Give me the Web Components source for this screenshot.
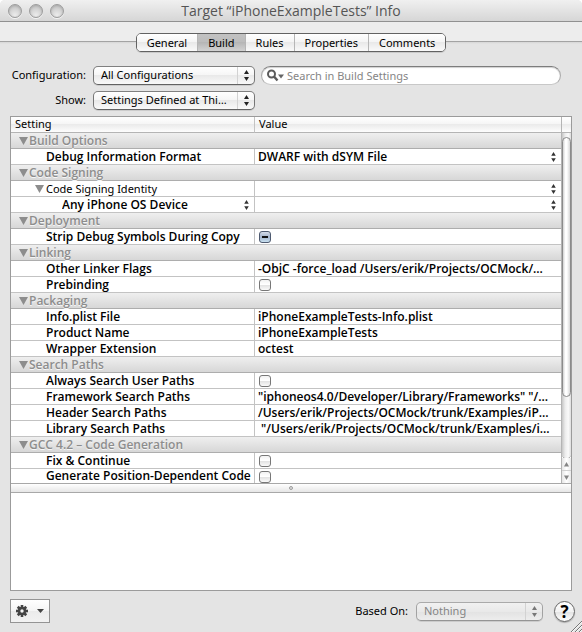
<!DOCTYPE html>
<html lang="en">
<head>
<meta charset="utf-8">
<title>Target “iPhoneExampleTests” Info</title>
<style>
html, body { margin: 0; height: 100%; }
body {
  background: #fff;
  color: #000;
  font: 11px/16px "Noto Sans", "Open Sans", "Liberation Sans", sans-serif;
}
</style>
</head>
<body>
<info-window>
  <title-bar slot="title">Target “iPhoneExampleTests” Info</title-bar>
  <segmented-tabs slot="tabs" items="General,Build,Rules,Properties,Comments" selected="Build"></segmented-tabs>
  <popup-field slot="filters" label="Configuration:" value="All Configurations"></popup-field>
  <search-field slot="filters" placeholder="Search in Build Settings"></search-field>
  <popup-field slot="filters" label="Show:" value="Settings Defined at Thi…"></popup-field>
  <split-pane slot="content">
    <settings-table slot="top"></settings-table>
    <scroll-bar slot="bar"></scroll-bar>
  </split-pane>
  <action-menu slot="footer"></action-menu>
  <popup-field slot="footer" class="based" label="Based On:" value="Nothing" disabled></popup-field>
  <help-button slot="footer"></help-button>
</info-window>

<script>
const define = (name, html, setup) => customElements.define(name, class extends HTMLElement {
  connectedCallback() {
    if (this.shadowRoot) return;
    const root = this.attachShadow({ mode: 'open' });
    root.innerHTML = typeof html === 'function' ? html(this) : html;
    if (setup) setup(root, this);
  }
});

const arrows = `<svg class="arrows" width="7" height="11" viewBox="0 0 7 11" aria-hidden="true"><path d="M3.5 0L6 4H1zM3.5 11L6 7H1z" fill="currentColor"/></svg>`;

define('info-window', `
<style>
:host { display: flex; flex-direction: column; height: 100vh; min-height: 360px; box-sizing: border-box; position: relative;
  background: #e4e4e4; border-radius: 5px 5px 0 0; overflow: hidden; }
.filters { display: grid; grid-template-columns: auto 1fr; gap: 6px; padding: 14px 21px 6px 8px; }
.content { flex: 1 1 0; min-height: 0; display: flex; margin: 0 10px; }
footer { display: flex; align-items: center; padding: 8px 7px 9px 10px; }
.grip { position: absolute; right: 0; bottom: 0; }
::slotted(.based) { --label: auto; --field: 127px; --gap: 8px; margin: 0 11px 0 auto; }
::slotted(split-pane) { flex: 1; min-width: 0; }
</style>
<slot name="title"></slot>
<slot name="tabs"></slot>
<div class="filters"><slot name="filters"></slot></div>
<main class="content"><slot name="content"></slot></main>
<footer><slot name="footer"></slot></footer>
<svg class="grip" width="12" height="12" viewBox="0 0 12 12" aria-hidden="true"><path d="M1 12L12 1M5 12L12 5M9 12L12 9" stroke="#777"/><path d="M2 12L12 2M6 12L12 6M10 12L12 10" stroke="#f8f8f8"/></svg>
`);

define('title-bar', `
<style>
:host { display: grid; grid-template-columns: 1fr auto 1fr; align-items: center; height: 22px; box-sizing: border-box; padding: 0 8px;
  background: linear-gradient(#f0f0f0, #d6d6d6); border-bottom: 1px solid #919191; }
.lights { display: flex; gap: 7px; }
button { width: 14px; height: 14px; padding: 0; border: 1px solid #9c9c9c; border-radius: 50%;
  background: radial-gradient(circle at 50% 85%, #ececec, #c6c6c6 80%); box-shadow: inset 0 1px 2px #aaa, 0 1px 0 #f3f3f3; }
h1 { margin: 0; font: 14px/20px "Open Sans", "Noto Sans", sans-serif; color: #555; white-space: nowrap; }
</style>
<div class="lights"><button aria-label="Close"></button><button aria-label="Minimize"></button><button aria-label="Zoom"></button></div>
<h1><slot></slot></h1>
`);

define('segmented-tabs', el => `
<style>
:host { display: flex; justify-content: center; padding-top: 11px; color: #000;
  background: linear-gradient(#ededed 19px, #a3a3a3 19px, #a3a3a3 20px, #d6d6d6 20px, #e4e4e4 22px); }
div { display: flex; border: 1px solid #626262; border-radius: 5px; overflow: hidden; box-shadow: 0 1px 0 #c9c9c9; }
button { appearance: none; border: 0; border-left: 1px solid #b6b6b6; margin: 0; padding: 0 10px; height: 17px;
  font: inherit; line-height: 16px; color: inherit; background: linear-gradient(#fff, #f4f4f4 50%, #e9e9e9 50%, #fafafa); }
button:first-child { border-left: 0; }
button[aria-selected=true] { background: linear-gradient(#c2c2c2, #bcbcbc 50%, #b6b6b6 50%, #d2d2d2); }
</style>
<div role="tablist">${el.getAttribute('items').split(',').map(t =>
  `<button role="tab" aria-selected="${t === el.getAttribute('selected')}">${t}</button>`).join('')}</div>
`, root => {
  const tabs = [...root.querySelectorAll('button')];
  tabs.forEach(b => b.onclick = () => tabs.forEach(o => o.setAttribute('aria-selected', o === b)));
});

define('popup-field', el => `
<style>
:host { display: grid; grid-template-columns: var(--label, 78px) var(--field, 162px); column-gap: var(--gap, 7px); align-items: start; }
label { text-align: right; white-space: nowrap; line-height: 18px; }
.box { display: grid; grid-template-columns: 1fr 17px; align-items: start; height: 19px; box-sizing: border-box; color: #222;
  border: 1px solid #777; border-color: #808080 #767676 #626262; border-radius: 5px; box-shadow: 0 1px 0 #ccc;
  background: linear-gradient(#fff, #f5f5f5 50%, #e9e9e9 50%, #f9f9f9); }
select { appearance: none; grid-area: 1 / 1 / 2 / 3; width: 100%; height: 16px; margin: 0; border: 0; background: none;
  padding: 0 17px 0 7px; font: inherit; line-height: 16px; color: #000; opacity: 1; }
.mark { grid-area: 1 / 2; display: grid; place-items: center; height: 17px; pointer-events: none; border-left: 1px solid #d2d2d2; }
:host([disabled]) .box { color: #777; border-color: #aaa #a2a2a2 #959595; background: linear-gradient(#f1f1f1, #e9e9e9 50%, #e2e2e2 50%, #ededed); }
:host([disabled]) select { color: #858585; }
</style>
<label for="s">${el.getAttribute('label')}</label>
<div class="box"><select id="s" ${el.hasAttribute('disabled') ? 'disabled' : ''}><option>${el.getAttribute('value')}</option></select><span class="mark">${arrows}</span></div>
`);

define('search-field', el => `
<style>
:host { display: flex; align-items: center; height: 19px; box-sizing: border-box; padding: 0 8px 0 5px; gap: 3px;
  background: #fff; border: 1px solid #b5b5b5; border-color: #7d7d7d #a9a9a9 #c8c8c8; border-radius: 10px; box-shadow: inset 0 1px 1px #d0d0d0; }
input { appearance: none; flex: 1; min-width: 0; border: 0; outline: 0; background: none; padding: 0; margin: 0; height: 17px; font: inherit; color: #000; }
input::placeholder { color: #858585; opacity: 1; }
</style>
<svg width="17" height="13" viewBox="0 0 17 13" aria-hidden="true"><circle cx="4.5" cy="5" r="3.5" fill="none" stroke="#5c5c5c" stroke-width="2"/><path d="M7 7.5L10.5 11.500" stroke="#5c5c5c" stroke-width="2.400"/><path d="M11 5.500h6l-3 4z" fill="#666"/></svg>
<input type="search" aria-label="Search in Build Settings" placeholder="${el.getAttribute('placeholder')}">
`);

define('split-pane', `
<style>
:host { display: flex; flex-direction: column; box-sizing: border-box; border: 1px solid #9b9b9b; background: #fff; }
.top { flex: 1 1 0; min-height: 0; overflow: hidden; display: grid; grid-template: 100% / minmax(0, 1fr) 10px; }
.divider { display: grid; place-items: center; height: 10px; box-sizing: border-box; border: 1px solid #a8a8a8; border-width: 1px 0;
  background: linear-gradient(#fff, #e6e6e6); cursor: row-resize; }
.divider i { width: 4px; height: 4px; box-sizing: border-box; border: 1px solid #9c9c9c; border-radius: 50%; background: #ddd; }
.detail { height: 97px; background: #fff; }
</style>
<div class="top"><slot name="top"></slot><slot name="bar"></slot></div>
<div class="divider" role="separator"><i></i></div>
<div class="detail"><slot></slot></div>
`);

define('scroll-bar', `
<style>
:host { display: grid; grid-template-rows: 16px 1fr 12px 13px; min-height: 0; color: #858585; border-left: 1px solid #b4b4b4; }
.cap { background: linear-gradient(#fff, #f5f5f5 50%, #ebebeb 50%, #fdfdfd); border-bottom: 1px solid #b4b4b4; }
.track { padding-top: 4px; min-height: 0; border-radius: 0 0 5px 5px; background: linear-gradient(90deg, #c6c6c6, #ececec 35%, #fafafa 70%, #dedede); box-shadow: 0 1px 0 #999; }
.knob { height: 81%; box-sizing: border-box; border: 1px solid #8b8b8b; border-radius: 5px;
  background: linear-gradient(90deg, #d2d2d2, #fff 35%, #fff 55%, #d8d8d8); }
button { display: grid; place-items: center; border: 0; padding: 0; margin: 0; min-width: 0; color: inherit; background: linear-gradient(90deg, #e6e6e6, #fff 50%, #eaeaea); }
button + button { border-top: 1px solid #d0d0d0; }
</style>
<div class="cap"></div>
<div class="track"><div class="knob"></div></div>
<button aria-label="Scroll up"><svg width="5" height="5" viewBox="0 0 5 5"><path d="M2.500 0L5 4.500H0z" fill="currentColor"/></svg></button>
<button aria-label="Scroll down"><svg width="5" height="5" viewBox="0 0 5 5"><path d="M2.500 5L5 .5H0z" fill="currentColor"/></svg></button>
`);

const rows = [
  { group: 'Build Options' },
  { name: 'Debug Information Format', popup: 'DWARF with dSYM File' },
  { group: 'Code Signing' },
  { name: 'Code Signing Identity', parent: true, popup: '' },
  { name: 'Any iPhone OS Device', child: true, popup: '' },
  { group: 'Deployment' },
  { name: 'Strip Debug Symbols During Copy', check: 'mixed' },
  { group: 'Linking' },
  { name: 'Other Linker Flags', text: '-ObjC -force_load /Users/erik/Projects/OCMock/…' },
  { name: 'Prebinding', check: 'off' },
  { group: 'Packaging' },
  { name: 'Info.plist File', text: 'iPhoneExampleTests-Info.plist' },
  { name: 'Product Name', text: 'iPhoneExampleTests' },
  { name: 'Wrapper Extension', text: 'octest' },
  { group: 'Search Paths' },
  { name: 'Always Search User Paths', check: 'off' },
  { name: 'Framework Search Paths', text: '"iphoneos4.0/Developer/Library/Frameworks" "/…' },
  { name: 'Header Search Paths', text: '/Users/erik/Projects/OCMock/trunk/Examples/iP…' },
  { name: 'Library Search Paths', text: ' "/Users/erik/Projects/OCMock/trunk/Examples/i…' },
  { group: 'GCC 4.2 – Code Generation' },
  { name: 'Fix & Continue', check: 'off' },
  { name: 'Generate Position-Dependent Code', check: 'off' }
];
const esc = s => s.replace(/&/g, '&amp;').replace(/"/g, '&quot;');
const triangle = label => `<button class="tri" aria-expanded="true" aria-label="${label}"><svg width="9" height="8" viewBox="0 0 9 8"><path d="M0 0h9L4.500 8z" fill="#8d8d8d"/></svg></button>`;
const popup = (label, value) => `<div class="pop"><select aria-label="${esc(label)}"><option>${esc(value)}</option></select>${arrows}</div>`;
const nameCell = (r, i) => r.child ? popup('Signing condition', r.name)
  : `${r.parent ? triangle(r.name) : ''}${r.check ? `<label for="c${i}">${esc(r.name)}</label>` : esc(r.name)}`;
const valueCell = (r, i) => r.check ? `<input type="checkbox" id="c${i}" class="${r.check}">`
  : 'popup' in r ? popup(r.name + ' value', r.popup) : esc(r.text);

define('settings-table', `
<style>
:host { display: block; min-width: 0; overflow: hidden; }
table { width: 100%; table-layout: fixed; border-collapse: separate; border-spacing: 0; }
col:first-child { width: 244px; }
th, td { box-sizing: border-box; height: 16px; padding: 0 4px; border-bottom: 1px solid #c3c3c3; text-align: left; font-weight: 400;
  line-height: 15px; white-space: pre; vertical-align: top; }
td { overflow: hidden; }
thead th { line-height: 14px; background: linear-gradient(#fff, #f5f5f5 50%, #ebebeb 50%, #fdfdfd); border-color: #b4b4b4; }
thead th:first-child, tbody th:not([colspan]) { border-right: 1px solid #c3c3c3; }
tbody { font-family: "Open Sans", "Noto Sans", sans-serif; font-size: 12px; }
tbody th:not([colspan]), tbody td { font-weight: 600; }
tbody th:not([colspan]) { padding: 0 0 0 35px; }
tbody td { padding: 0 0 0 3px; }
.group th { padding: 0 0 0 8px; font-weight: 600; color: #8d8d8d; text-shadow: 0 1px 0 #f6f6f6; border-color: #adadad;
  background: linear-gradient(#efefef, #d7d7d7); }
tbody .parent th:not([colspan]) { padding-left: 24px; font: 11px/15px "Noto Sans", sans-serif; }
tbody .child th:not([colspan]) { padding-left: 51px; }
tbody tr:last-child > * { height: 14px; line-height: 14px; border-bottom: 0; }
tbody tr:last-child label { display: block; height: 14px; }
.tri { appearance: none; border: 0; background: none; padding: 0; margin: 0 1px 0 0; width: 9px; height: 8px; line-height: 8px; vertical-align: 0; }
.parent .tri { margin-right: 2px; }
.tri svg { display: block; }
.pop { display: grid; grid-template-columns: 1fr 14px; align-items: center; height: 15px; color: #333; }
.pop select { appearance: none; grid-area: 1 / 1 / 2 / 3; width: 100%; height: 15px; padding: 0; margin: 0; border: 0; background: none;
  font: inherit; line-height: 15px; color: #000; }
.pop svg { grid-area: 1 / 2; pointer-events: none; margin-left: 3px; height: 10px; }
input { appearance: none; display: block; width: 12px; height: 12px; margin: 2px 0 0 1px; box-sizing: border-box; border: 1px solid #777;
  border-radius: 3px; background: linear-gradient(#f2f2f2, #fff 45%, #e4e4e4 55%, #fafafa); }
input:indeterminate { border-color: #4e5a70; background: linear-gradient(#111, #111) 50% 50% / 6px 2px no-repeat, linear-gradient(#d5dce8, #a4b4cc 50%, #c7e0f0); }
</style>
<table>
  <colgroup><col><col></colgroup>
  <thead><tr><th scope="col">Setting</th><th scope="col">Value</th></tr></thead>
  <tbody>${rows.map((r, i) => r.group
    ? `<tr class="group"><th colspan="2" scope="rowgroup">${triangle(r.group)}${r.group}</th></tr>`
    : `<tr class="${r.parent ? 'parent' : r.child ? 'child' : ''}"><th scope="row">${nameCell(r, i)}</th><td>${valueCell(r, i)}</td></tr>`).join('')}</tbody>
</table>
`, root => root.querySelectorAll('.mixed').forEach(c => c.indeterminate = true));

define('action-menu', `
<style>
:host { display: block; }
button { display: flex; align-items: center; gap: 9px; width: 40px; height: 24px; box-sizing: border-box; margin: 0; padding: 0 5px;
  border: 1px solid #949494; background: linear-gradient(#fff, #f5f5f5 50%, #ebebeb 50%, #f2f2f2); }
svg { flex: none; }
</style>
<button aria-label="Action">
  <svg width="12" height="12" viewBox="-6 -6 12 12"><g fill="#444"><path d="M-1.300-6h2.600V6h-2.600z"/><path d="M-1.300-6h2.600V6h-2.600z" transform="rotate(45)"/><path d="M-1.300-6h2.600V6h-2.600z" transform="rotate(90)"/><path d="M-1.300-6h2.600V6h-2.600z" transform="rotate(135)"/><circle r="4.200"/></g><circle r="1.700" fill="#f4f4f4"/></svg>
  <svg width="7" height="4" viewBox="0 0 7 4"><path d="M0 0h7L3.500 4z" fill="#444"/></svg>
</button>
`);

define('help-button', `
<style>
:host { display: block; }
button { display: grid; place-items: center; width: 21px; height: 21px; box-sizing: border-box; margin: 0; padding: 0; border: 1px solid #666; border-radius: 50%;
  font: 700 17px/19px "Open Sans", "Noto Sans", sans-serif; color: #000; background: linear-gradient(#fff, #f2f2f2 50%, #e2e2e2 50%, #fff); box-shadow: 0 1px 1px #aaa; }
</style>
<button aria-label="Help">?</button>
`);
</script>
</body>
</html>
